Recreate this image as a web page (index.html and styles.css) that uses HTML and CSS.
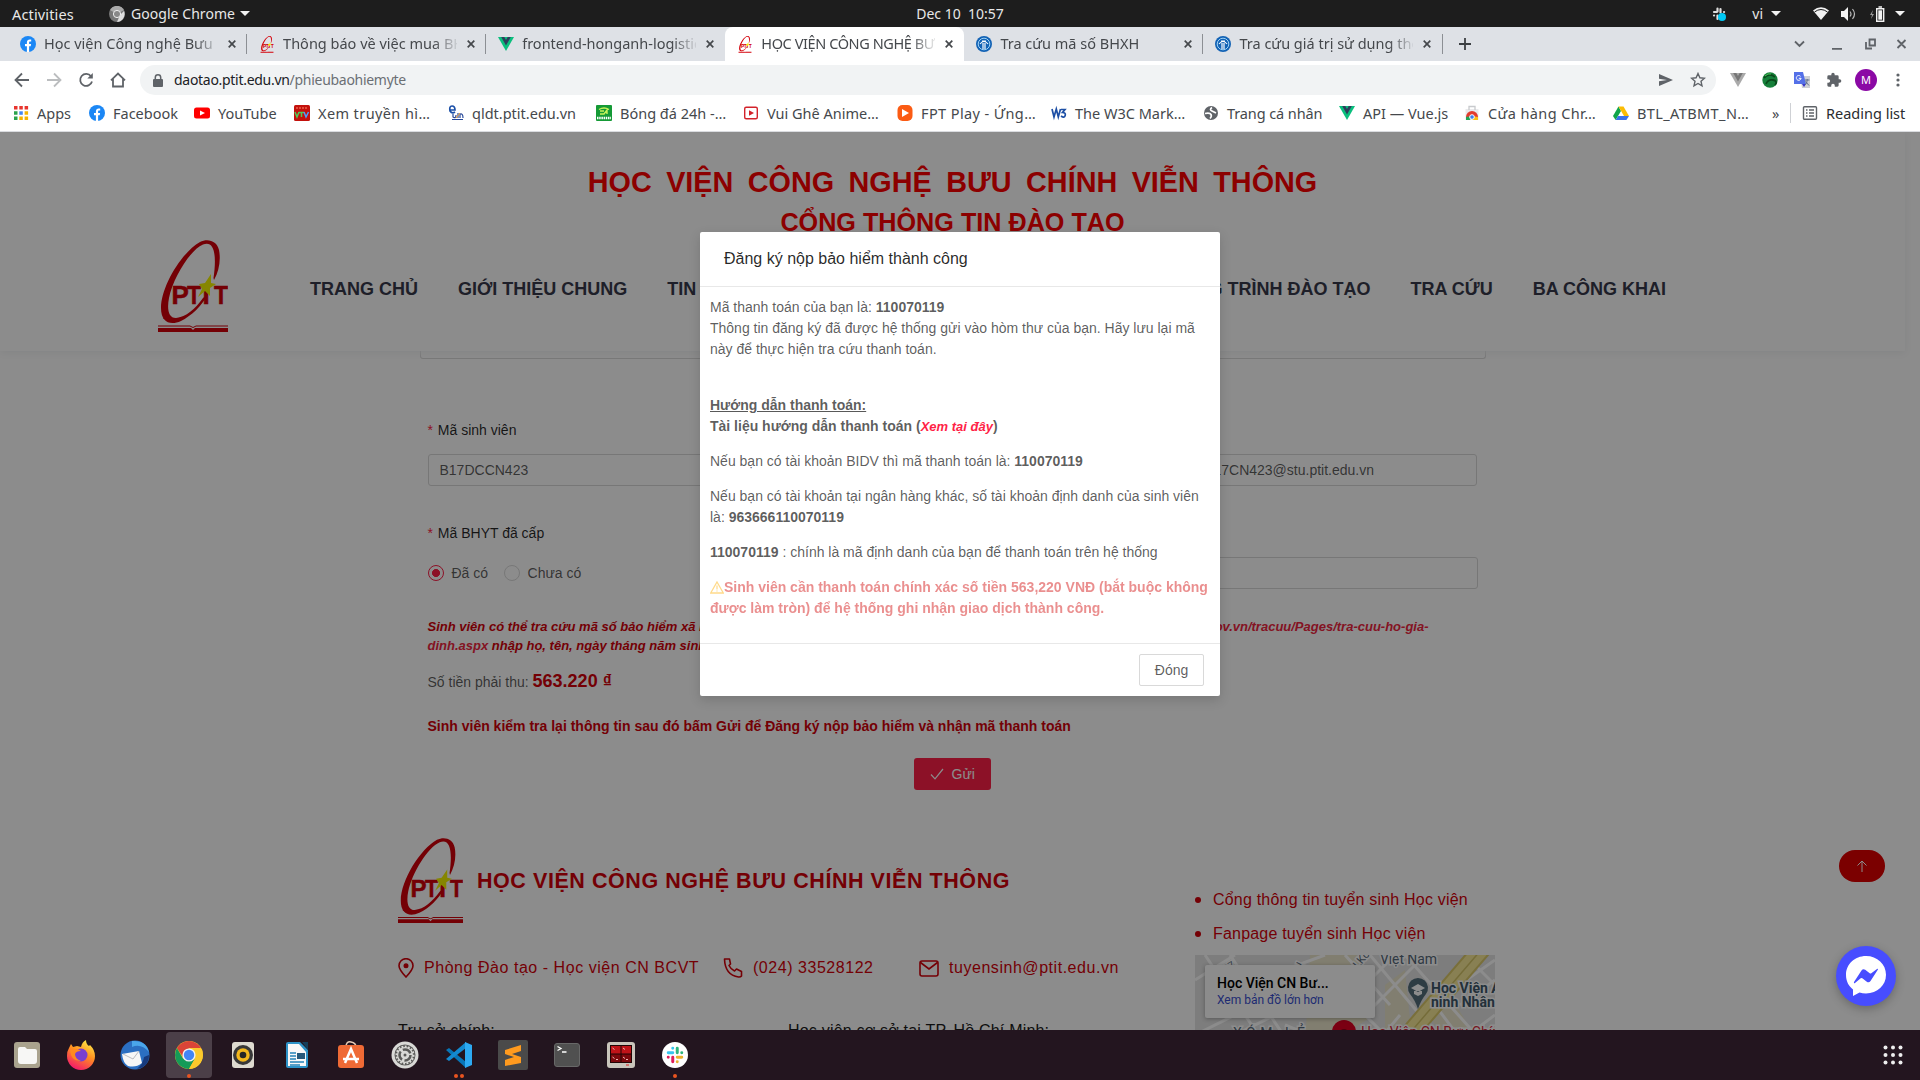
FILE: index.html
```html
<!DOCTYPE html>
<html lang="vi">
<head>
<meta charset="utf-8">
<title>Đăng ký nộp bảo hiểm</title>
<link rel="stylesheet" href="styles.css">
</head>
<body>
<svg class="defs" width="0" height="0">
  <symbol id="ptit" viewBox="0 0 70 92">
    <path fill="#d4000a" d="M56 40C61 31 63 20 61 10C59 1 50-2 42 2C24 12 3 46 3 68C3 82 12 86 23 81C33 76 44 66 50 54L45 58C37 69 28 77 18 78C10 78 9 68 11 58C15 38 32 10 45 4.500C56 0 59 14 55.500 38Z"/>
    <path fill="none" stroke="#d4000a" stroke-width=".8" d="M19 31Q24 20 31 13M5 78Q12 83 22 78"/>
    <g fill="#d4000a" stroke="#d4000a" stroke-width=".5" font-family="Liberation Sans, sans-serif" font-weight="700" font-size="26"><text x="13.500" y="64">P</text><text x="29" y="64" textLength="14" lengthAdjust="spacingAndGlyphs">T</text><text x="44.500" y="64">I</text><text x="56" y="64" textLength="14" lengthAdjust="spacingAndGlyphs">T</text></g>
    <path fill="#f4f400" d="M53 34L53 43L58 44L52 48L52 56L47 51L40 57L44 49L41 44L47 43Z"/>
    <path fill="#d4000a" d="M0 85.500H32L35 87L38 85.500H70V86.600H38L35 88L32 86.600H0ZM0 88H33L35 90L37 88H70V92H0Z"/>
  </symbol>
  <symbol id="fb" viewBox="0 0 16 16"><circle cx="8" cy="8" r="8" fill="#1b87f5"/><path fill="#fff" d="M6.9 16V10.3H5V8h1.9V6.4c0-2 1.1-3 2.8-3l1.5.1v2h-1c-.9 0-1.1.5-1.1 1.1V8h2l-.4 2.3H9.100V16z"/></symbol>
  <symbol id="vue" viewBox="0 0 16 16"><path fill="#0abf7d" d="M0 1h16L8 15z"/><path fill="#2f3e5c" d="M3.200 1H6.300L8 4l1.700-3h3.100L8 9.500z"/></symbol>
  <symbol id="bhxh" viewBox="0 0 16 16"><circle cx="8" cy="8" r="8" fill="#1262b5"/><circle cx="8" cy="8" r="5.800" fill="none" stroke="#9ed2f5"/><path d="M4 8Q8 3 12 8M7 7v6M9 7v6M6 5h4" stroke="#fff" fill="none" stroke-width="1.200"/></symbol>
  <symbol id="x" viewBox="0 0 8 8"><path d="M.7.7l6.600 6.600M7.300.7L.7 7.300" stroke="#45484c" stroke-width="1.700" fill="none"/></symbol>
  <symbol id="chrome" viewBox="0 0 28 28"><circle cx="14" cy="14" r="14" fill="#fbc92c"/><path fill="#db4437" d="M1.900 7A14 14 0 0 1 26.100 7H14L8 16z"/><path fill="#159b58" d="M1.900 7A14 14 0 0 0 14 28L20 17.500 8 17.500z"/><path fill="#fbc92c" d="M14 28L20 17.500 14 8H26.500A14 14 0 0 1 14 28z"/><circle cx="14" cy="14" r="6.600" fill="#f1f1f1"/><circle cx="14" cy="14" r="5.200" fill="#4285f4"/></symbol>
  <symbol id="hash" viewBox="0 0 20 20"><g stroke-width="3.300" stroke-linecap="round"><path stroke="#36c5f0" d="M2.500 7.500h5M7.500 2.500v.1"/><path stroke="#2eb67d" d="M12.500 2.500v5M17.500 7.500v.1"/><path stroke="#ecb22e" d="M12.500 12.500h5M12.500 17.500v.1"/><path stroke="#e01e5a" d="M7.500 12.500v5M2.500 12.500v.1"/></g></symbol>
</svg>

<header class="desktop-bar">
  <div class="db-left"><span class="activities">Activities</span>
    <svg width="16" height="16" viewBox="0 0 16 16"><circle cx="8" cy="8" r="8" fill="#777"/><path d="M8 8L1 4A8 8 0 0 1 15 4z" fill="#aaa"/><path d="M15 5a8 8 0 0 1-7 11l3-7z" fill="#ddd"/><circle cx="8" cy="8" r="3.600" fill="#888" stroke="#eee"/></svg>
    <span class="appname">Google Chrome</span><i class="caret"></i></div>
  <div class="clock">Dec 10&nbsp; 10:57</div>
  <div class="db-right">
    <svg width="14" height="14" viewBox="0 0 14 14"><path d="M2 5h3M5.500 1.500v3M8.500 2v3.500M12 5h.1M2 8.500h.1M5.500 8.500v3.500" stroke="#ddd" stroke-width="2.200" stroke-linecap="round"/><circle cx="10" cy="10" r="4" fill="#00c9f5"/></svg>
    <span class="lang">vi</span><i class="caret"></i>
    <svg class="wifi" width="16" height="13" viewBox="0 0 16 13"><path d="M0 3.500Q8-3 16 3.500L8 13z" fill="#f2f2f2"/><path d="M1.500 5Q8 0 14.500 5" fill="none" stroke="#1d1d1d"/></svg>
    <svg class="vol" width="16" height="14" viewBox="0 0 16 14"><path d="M0 4h3l4-4v14l-4-4H0z" fill="#f2f2f2"/><path d="M9 4.500q2 2.500 0 5M11.500 2q4 5 0 10" fill="none" stroke="#bbb" stroke-width="1.200"/></svg>
    <svg class="bat" width="16" height="16" viewBox="0 0 16 16"><path d="M3 4L0 9h2l-1 4 3-5H2z" fill="#999"/><path d="M6.700 2.700h7v12.600h-7zM8.500 1h3.500" fill="none" stroke="#f2f2f2" stroke-width="1.400"/><path d="M8.300 4.300h3.800v9.400H8.300z" fill="#f2f2f2"/></svg>
    <i class="caret"></i>
  </div>
</header>

<nav class="tabs">
  <div class="tab"><svg width="16" height="16"><use href="#fb"/></svg><span>Học viện Công nghệ Bưu</span><svg class="close" width="8" height="8"><use href="#x"/></svg></div>
  <div class="tab"><svg width="14" height="17"><use href="#ptit"/></svg><span>Thông báo về việc mua BH</span><svg class="close" width="8" height="8"><use href="#x"/></svg></div>
  <div class="tab plain"><svg width="16" height="16"><use href="#vue"/></svg><span>frontend-honganh-logistics</span><svg class="close" width="8" height="8"><use href="#x"/></svg></div>
  <div class="tab active"><svg width="14" height="17"><use href="#ptit"/></svg><span class="caps">HỌC VIỆN CÔNG NGHỆ BƯU</span><svg class="close" width="8" height="8"><use href="#x"/></svg></div>
  <div class="tab"><svg width="16" height="16"><use href="#bhxh"/></svg><span>Tra cứu mã số BHXH</span><svg class="close" width="8" height="8"><use href="#x"/></svg></div>
  <div class="tab"><svg width="16" height="16"><use href="#bhxh"/></svg><span>Tra cứu giá trị sử dụng thẻ</span><svg class="close" width="8" height="8"><use href="#x"/></svg></div>
  <svg class="plus" width="12" height="12" viewBox="0 0 12 12"><path d="M6 0v12M0 6h12" stroke="#3c4043" stroke-width="1.800"/></svg>
  <svg class="winctl" width="114" height="14" viewBox="0 0 114 14" fill="none" stroke="#5f6368" stroke-width="1.800"><path d="M1 4.500l4.500 4.500L10 4.500M38 11.800h10M75.500 2.500h5.500v6h-5.500zM72 5v6.500h6M103.500 3l8 8M111.500 3l-8 8"/></svg>
</nav>

<div class="toolbar">
  <svg class="navicons" width="114" height="16" viewBox="0 0 114 16" fill="none" stroke="#5f6368" stroke-width="1.800"><path d="M15 8H2M8 1.500L1.500 8 8 14.500"/><path stroke="#bbbdbf" d="M33 8h13M40 1.500L46.500 8 40 14.500"/><path d="M77 4.300A6 6 0 1 0 78 9.500"/><path d="M78.800 1v5.500h-5.500z" fill="#5f6368" stroke="none"/><path d="M97 8.300L104 1.500l7 6.800M99 7v7.500h10V7" /></svg>
  <div class="omnibox">
    <svg width="10" height="13" viewBox="0 0 10 13"><rect y="5" width="10" height="8" rx="1" fill="#5f6368"/><path d="M2.300 6V3.500a2.700 2.700 0 0 1 5.400 0V6" fill="none" stroke="#5f6368" stroke-width="1.500"/></svg>
    <p><b>daotao.ptit.edu.vn</b>/phieubaohiemyte</p>
    <svg width="14" height="12" viewBox="0 0 14 12"><path d="M0 0l14 6-14 6V7.200L8 6 0 4.800z" fill="#5f6368"/></svg>
    <svg class="star" width="16" height="16" viewBox="0 0 16 16"><path d="M8 1.500l1.900 4.300 4.600.4-3.500 3.100 1 4.600L8 11.500l-4 2.400 1-4.600L1.500 6.200l4.600-.4z" fill="none" stroke="#5f6368" stroke-width="1.400"/></svg>
  </div>
  <div class="exts">
    <svg width="16" height="16" viewBox="0 0 16 16"><path fill="#aaa" d="M0 1h16L8 15z"/><path fill="#777" d="M3.200 1H6.300L8 4l1.700-3h3.100L8 9.500z"/></svg>
    <svg width="16" height="16" viewBox="0 0 16 16"><circle cx="8" cy="8" r="7.700" fill="#16803a"/><path d="M2 6q5-6 11-1M4 12q2-5 7-4t2 5" stroke="#0b4a1c" fill="none" stroke-width="1.800"/><path d="M3 4q3-3 6-2" stroke="#4eca5c" fill="none"/></svg>
    <svg width="16" height="16" viewBox="0 0 16 16"><path d="M6 4h10v12H8z" fill="#cdd0d5"/><path d="M0 0h9l3 12H0z" fill="#5470e8"/><path d="M8 12h4l-2 3z" fill="#3a36c8"/><path d="M6.500 4.300a2.400 2.400 0 1 0 .6 2H4.800" stroke="#fff" fill="none"/><path d="M11 8h4.500M13.200 7v1q0 3-2 5M11.500 9.500l3.500 4" stroke="#61708c" fill="none"/></svg>
    <svg width="16" height="16" viewBox="0 0 24 24"><path fill="#5f6368" d="M20.500 11H19V7a2 2 0 0 0-2-2h-4V3.500a2.500 2.500 0 0 0-5 0V5H4a2 2 0 0 0-2 2v3.800h1.500a2.700 2.700 0 0 1 0 5.400H2V20a2 2 0 0 0 2 2h3.800v-1.500a2.700 2.700 0 0 1 5.400 0V22H17a2 2 0 0 0 2-2v-4h1.500a2.500 2.500 0 0 0 0-5z"/></svg>
    <span class="avatar">M</span>
    <svg width="16" height="16" viewBox="0 0 16 16" fill="#5f6368"><circle cx="8" cy="3" r="1.600"/><circle cx="8" cy="8" r="1.600"/><circle cx="8" cy="13" r="1.600"/></svg>
  </div>
</div>

<div class="bookmarks">
  <a><svg width="16" height="16" viewBox="0 0 16 16"><path fill="#e8352e" d="M1 1h3.500v3.500H1zM6.300 1h3.500v3.500H6.300zM11.600 1h3.500v3.500h-3.500z"/><path fill="#2ba24c" d="M1 6.300h3.500v3.500H1zM1 11.600h3.500v3.500H1z"/><path fill="#4285f4" d="M6.300 6.300h3.500v3.500H6.300z"/><path fill="#f5b400" d="M11.600 6.300h3.500v3.500h-3.500zM6.300 11.600h3.500v3.500H6.300zM11.600 11.600h3.500v3.500h-3.500z"/></svg>Apps</a>
  <a><svg width="16" height="16"><use href="#fb"/></svg>Facebook</a>
  <a><svg width="16" height="16" viewBox="0 0 16 16"><rect y="2.500" width="16" height="11" rx="2.500" fill="#f00"/><path d="M6 5.500L11 8l-5 2.500z" fill="#fff"/></svg>YouTube</a>
  <a class="loose"><svg width="16" height="16" viewBox="0 0 16 16"><rect width="16" height="16" rx="1.500" fill="#c3110c"/><path d="M2 3h12" stroke="#ff8a6a" stroke-dasharray="2 1"/><path d="M1 7l2 5 2-5M5 7.500h5M7.500 7v5" stroke="#54c95a" fill="none" stroke-width="1.500"/><path d="M10 7l2 5 2.500-5" stroke="#4ca0ff" fill="none" stroke-width="1.500"/></svg>Xem truyền hì…</a>
  <a><svg width="16" height="16" viewBox="0 0 16 16"><path d="M2 5h5Q7 1 4 1T2 6q2 3 5 1" fill="none" stroke="#1c50a8" stroke-width="1.700"/><path d="M5 9v3q3 2 3-2M10 8v5M12 13V9q3-1 3 4M4 14.500h11" fill="none" stroke="#26489a" stroke-width="1.200"/><path d="M8 13l4-5" stroke="#ee9b2e"/></svg>qldt.ptit.edu.vn</a>
  <a><svg width="16" height="16" viewBox="0 0 16 16"><rect width="16" height="16" rx="1" fill="#159a36"/><path d="M3 4.500q5-3 10 0M4 9h4l3-4v4M4 6h4" fill="none" stroke="#c7f25a" stroke-width="1.400"/><path d="M1 13h14" stroke="#fff" stroke-width="2.500" stroke-dasharray="1.500 .7"/></svg>Bóng đá 24h -…</a>
  <a><svg width="16" height="16" viewBox="0 0 16 16"><rect x="1.700" y="2.200" width="12.600" height="11.600" rx="1.500" fill="#fff" stroke="#d3222a" stroke-width="1.400"/><path d="M6 5.200L11 8l-5 2.800z" fill="#d3222a"/></svg>Vui Ghê Anime…</a>
  <a class="loose"><svg width="16" height="16" viewBox="0 0 16 16"><rect x=".5" width="15" height="16" rx="5" fill="#fb5b13"/><path d="M5 4l7 4-7 4z" fill="#fff"/></svg>FPT Play - Ứng…</a>
  <a><svg width="16" height="16" viewBox="0 0 16 16"><path d="M1 4l2 8 2.300-8 2 8 2.200-8M10 4.500h4l-2.500 3q3.500 0 2.700 3T10 11" fill="none" stroke="#1d4fa5" stroke-width="1.700"/></svg>The W3C Mark…</a>
  <a class="tight"><svg width="16" height="16" viewBox="0 0 16 16"><circle cx="8" cy="8" r="7" fill="#5f6368"/><path d="M2 8.500q5-1 6 1t-1 4M9 2.500q-3 2 0 3.500t4 2" fill="none" stroke="#fff" stroke-width="1.700"/></svg>Trang cá nhân</a>
  <a><svg width="16" height="16"><use href="#vue"/></svg>API — Vue.js</a>
  <a class="loose"><svg width="16" height="16" viewBox="0 0 16 16"><path d="M1.500 4h13v11h-13z" fill="#e9eaec"/><path d="M5 5V1.500h6V5" fill="none" stroke="#c8cacd" stroke-width="1.300"/><path d="M2 12a6 6 0 0 1 12 0H8z" fill="#e33b2e"/><path d="M2 12v3h4l2-4z" fill="#23a455"/><path d="M14 12v3H8V11z" fill="#fbc116"/><circle cx="8" cy="12" r="2.300" fill="#3b7ded" stroke="#fff"/></svg>Cửa hàng Chr…</a>
  <a class="loose"><svg width="16" height="16" viewBox="0 0 16 16"><path fill="#10a54a" d="M5.500 1.500L0 11l2.600 4L8 6z"/><path fill="#fbbc04" d="M5.500 1.500h5L16 11h-5z"/><path fill="#3a71e8" d="M5 11h11l-2.600 4H2.600z"/></svg>BTL_ATBMT_N…</a>
  <span class="more">»</span>
  <a class="reading"><svg width="16" height="16" viewBox="0 0 16 16"><rect x="1.500" y="1.700" width="13" height="12.600" rx="1" fill="none" stroke="#5f6368" stroke-width="1.400"/><path d="M4 5h1.500M4 8h1.500M4 11h1.500M7 5h5M7 8h5M7 11h5" stroke="#5f6368" stroke-width="1.300"/></svg>Reading list</a>
</div>

<main class="page">
  <header class="site-header">
    <h1>HỌC VIỆN CÔNG NGHỆ BƯU CHÍNH VIỄN THÔNG</h1>
    <h2>CỔNG THÔNG TIN ĐÀO TẠO</h2>
    <div class="menu-row">
      <svg class="logo" width="70" height="92"><use href="#ptit"/></svg>
      <ul class="menu"><li>TRANG CHỦ</li><li>GIỚI THIỆU CHUNG</li><li>TIN TỨC</li><li class="push">CHƯƠNG TRÌNH ĐÀO TẠO</li><li>TRA CỨU</li><li>BA CÔNG KHAI</li></ul>
    </div>
  </header>

  <section class="form">
    <div class="frag"></div>
    <div class="fields">
      <label class="lbl"><i>*</i> Mã sinh viên</label>
      <div class="row"><div class="input">B17DCCN423</div><div class="input"></div><div class="input mail">B17CN423@stu.ptit.edu.vn</div></div>
      <label class="lbl second"><i>*</i> Mã BHYT đã cấp</label>
      <div class="row wide"><div class="radios"><span class="radio on"></span>Đã có<span class="radio"></span>Chưa có</div><div class="input bh"></div></div>
      <p class="hint"><span class="split"><span>Sinh viên có thể tra cứu mã số bảo hiểm xã hội tại</span><em>baohiemxahoi.gov.vn/tracuu/Pages/tra-cuu-ho-gia-</em></span><em>dinh.aspx</em> nhập họ, tên, ngày tháng năm sinh</p>
      <p class="amount">Số tiền phải thu: <b>563.220 ₫</b></p>
      <p class="confirm">Sinh viên kiểm tra lại thông tin sau đó bấm Gửi để Đăng ký nộp bảo hiểm và nhận mã thanh toán</p>
      <button class="send"><svg width="14" height="12" viewBox="0 0 14 12"><path d="M1 6.500l4 4.300L13 1" fill="none" stroke="#fff" stroke-width="1.200"/></svg>Gửi</button>
    </div>
  </section>

  <footer class="site-footer">
    <div class="f-left">
      <div class="brand"><svg width="65" height="85" viewBox="0 0 70 92" preserveAspectRatio="none"><use href="#ptit" width="70" height="92"/></svg><h3>HỌC VIỆN CÔNG NGHỆ BƯU CHÍNH VIỄN THÔNG</h3></div>
      <div class="contacts">
        <span><svg width="16" height="20" viewBox="0 0 16 20" fill="none" stroke="#d4000a" stroke-width="1.600"><path d="M8 19Q1 11.500 1 7.700a7 7 0 0 1 14 0Q15 11.500 8 19z"/><circle cx="8" cy="7.700" r="1.700" fill="#d4000a"/></svg>Phòng Đào tạo - Học viện CN BCVT</span>
        <span><svg width="20" height="20" viewBox="0 0 20 20" fill="none" stroke="#d4000a" stroke-width="1.600"><path d="M1.500 1H6.500l1 5-1.500 1.500q2 4 5.500 5.500l2-2 5 2.500V18q-1 1.200-3 1Q2 17 1.500 1z" stroke-linejoin="round"/></svg>(024) 33528122</span>
        <span><svg width="20" height="17" viewBox="0 0 20 17" fill="none" stroke="#d4000a" stroke-width="1.600"><rect x="1" y="1" width="18" height="15" rx="2"/><path d="M1.500 2.500L10 9l8.500-6.500"/></svg>tuyensinh@ptit.edu.vn</span>
      </div>
      <div class="offices"><span>Trụ sở chính:</span><span>Học viện cơ sở tại TP. Hồ Chí Minh:</span></div>
    </div>
    <div class="f-right">
      <ul><li>Cổng thông tin tuyển sinh Học viện</li><li>Fanpage tuyển sinh Học viện</li></ul>
      <div class="map">
        <svg width="300" height="90" viewBox="0 0 300 90">
          <rect width="300" height="90" fill="#e3e3e3"/>
          <path d="M115 0h60l-20 25 25 35-50 30h-20zM255 40l30 50h-35l-15-30zM190 30l20-15 5 50-25 15z" fill="#ebe6cc"/>
          <g stroke="#fff" fill="none" stroke-width="3"><path d="M0 25L40 0M10 0l60 90M35 0l60 90M75 20L130 0M130 20l60 60M150 0l45 50M175 0l50 60M170 60l60-60M180 90L205 60M210 0l80 90M240 50l30 40M250 40L300 5M265 50l35-25M280 75l20-15M0 80l60-30M20 90l60-30M90 70l50 20M270 0l30 30M165 35l30-30"/></g>
          <path d="M292-12L196 100" stroke="#dcca6a" stroke-width="19"/><path d="M292-12L196 100" stroke="#f8ea98" stroke-width="15"/><path d="M292-12L196 100" stroke="#d5c568" stroke-width="1.500"/>
          <g font-family="Roboto, sans-serif" fill="#56697a" stroke="#fff" stroke-width="3" paint-order="stroke" font-size="14"><text x="185" y="9" textLength="57">Việt Nam</text><text x="98" y="14" font-size="11" transform="rotate(25 98 14)">764</text><text x="163" y="14" font-size="11" transform="rotate(-50 163 14)">LKô</text><text x="30" y="18" font-size="10" transform="rotate(-30 30 18)">P7</text><g font-weight="700" fill="#40586a"><text x="236" y="38">Học Viện An</text><text x="236" y="52">ninh Nhân dân</text></g><text x="38" y="83" textLength="72">XÓM LẺ</text><text x="166" y="82" fill="#d8283a">Học Viện CN Bưu Chính</text></g>
          <path d="M223 54Q220 45 215 39a10 10 0 1 1 16 0Q226 45 223 54z" fill="#546e7a"/><path d="M223 29l7 4-7 4-7-4zM219 36v3l4 2 4-2v-3" fill="#fff"/>
          <circle cx="149" cy="77" r="12" fill="#e00022"/><circle cx="149" cy="78" r="4" fill="#8c0016"/>
        </svg>
        <div class="mapcard"><b>Học Viện CN Bư...</b><a>Xem bản đồ lớn hơn</a></div>
      </div>
    </div>
  </footer>

  <div class="totop"><svg width="12" height="12" viewBox="0 0 12 12"><path d="M6 12V1M1.500 5.500L6 1l4.500 4.500" fill="none" stroke="#fff"/></svg></div>
  <div class="mask"></div>
  <section class="modal">
    <header>Đăng ký nộp bảo hiểm thành công</header>
    <div class="body">
      <p>Mã thanh toán của bạn là: <b>110070119</b><br>Thông tin đăng ký đã được hệ thống gửi vào hòm thư của bạn. Hãy lưu lại mã<br>này để thực hiện tra cứu thanh toán.</p>
      <br>
      <p><b><u>Hướng dẫn thanh toán:</u><br>Tài liệu hướng dẫn thanh toán (<em>Xem tại đây</em>)</b></p>
      <p>Nếu bạn có tài khoản BIDV thì mã thanh toán là: <b>110070119</b></p>
      <p>Nếu bạn có tài khoản tại ngân hàng khác, số tài khoản định danh của sinh viên<br>là: <b>963666110070119</b></p>
      <p><b>110070119</b> : chính là mã định danh của bạn để thanh toán trên hệ thống</p>
      <p class="warn"><svg width="14" height="13" viewBox="0 0 14 13"><path d="M7 1L13.300 12H.7z" fill="none" stroke="#ffb81f" stroke-width="1.300"/><path d="M7 4.500v4M7 9.500v1" stroke="#ffb81f" stroke-width="1.200"/></svg>Sinh viên cần thanh toán chính xác số tiền 563,220 VNĐ (bắt buộc không<br>được làm tròn) để hệ thống ghi nhận giao dịch thành công.</p>
    </div>
    <footer><button>Đóng</button></footer>
  </section>
  <div class="messenger"><svg width="40" height="40" viewBox="0 0 40 40"><path fill="#fff" d="M20 0C8.700 0 0 8.300 0 19c0 6 2.500 11 7 14.500V40l6.500-3.500c2 .6 4.200 1 6.500 1 11.300 0 20-8 20-18.700S31.300 0 20 0z"/><path fill="#474dff" d="M8 26l7.500-11.500q1.500-2 3.700-.7l4.500 3.500q.8.500 1.600 0L31 13q1.500-.8.800.8L24.500 25q-1.500 2-3.700.7L16.300 22.300q-.8-.5-1.600 0L9 27q-1.500.8-1-1z"/></svg></div>
</main>

<footer class="dock">
  <span><svg width="28" height="28" viewBox="0 0 28 28"><rect x="1" y="1" width="26" height="26" rx="3" fill="#aaa38e"/><path d="M5 8q0-2 2-2h5l2 2h8q2 0 2 2v10q0 3-3 3H8q-3 0-3-3z" fill="#f7f7f5"/></svg></span>
  <span><svg width="30" height="30" viewBox="0 0 30 30"><defs><linearGradient id="ff" x1=".8" y1="0" x2=".3" y2="1"><stop offset="0" stop-color="#fff04a"/><stop offset=".45" stop-color="#ff9020"/><stop offset="1" stop-color="#f4156d"/></linearGradient></defs><path fill="url(#ff)" d="M3 8l2-4 2 3 4-1 4 1Q16 2 20 0q0 4 3 6l1-1q5 5 5 11a14 14 0 0 1-28 0q0-5 2-8z"/><circle cx="15" cy="15" r="6.500" fill="#7a3fd0"/><path d="M4 10q6-3 11 1-5 0-6 3 0 5 6 7-10 1-11-11z" fill="#ff8a1f"/></svg></span>
  <span><svg width="30" height="30" viewBox="0 0 30 30"><circle cx="15" cy="15" r="14.500" fill="#2b6fc2"/><path d="M12 1q14-1 17 11-8-9-17-5z" fill="#4aa6ea"/><path d="M29 15q0 12-12 14 6-5 7-12z" fill="#173a7d"/><path d="M2 14l17-3 3 12q-6 5-14 3-5-3-6-12z" fill="#f6f6f6"/><path d="M3 14l10 5 6-8" fill="none" stroke="#b9bbc0"/></svg></span>
  <span class="current"><svg width="28" height="28"><use href="#chrome"/></svg><i></i></span>
  <span><svg width="24" height="28" viewBox="0 0 24 28"><rect x="1" y="1" width="22" height="26" rx="3" fill="#dedad0"/><circle cx="12" cy="14" r="10" fill="#383838"/><circle cx="12" cy="14" r="6.700" fill="#f3b71c"/><circle cx="12" cy="14" r="3.300" fill="#262626"/></svg></span>
  <span><svg width="24" height="28" viewBox="0 0 24 28"><path d="M1 3q0-2 2-2h12l8 8v16q0 2-2 2H3q-2 0-2-2z" fill="#2d93c8"/><path d="M3 3h11l7 8v14H3z" fill="#f8f8f8"/><path d="M17 1h6v8z" fill="#153f5b"/><path d="M5 12h6M5 15h6M5 18h6M5 21h14M5 24h10" stroke="#2482b8" stroke-width="1.300"/><rect x="12" y="12" width="8" height="6" fill="#25587a"/></svg></span>
  <span><svg width="28" height="28" viewBox="0 0 28 28"><path d="M9 6q0-6 5-5t5 5" fill="none" stroke="#e9cdb7" stroke-width="1.500"/><rect x="1" y="4" width="26" height="23" rx="3" fill="#ef6a35"/><path d="M8 22l6-14 6 14M6 18h16" fill="none" stroke="#fff" stroke-width="2.500"/></svg></span>
  <span><svg width="28" height="28" viewBox="0 0 28 28"><circle cx="14" cy="14" r="13.500" fill="#d9d9d6"/><circle cx="14" cy="14" r="10.500" fill="#5a5a58"/><circle cx="14" cy="14" r="8" fill="#d9d9d6"/><circle cx="14" cy="14" r="8.500" fill="none" stroke="#d9d9d6" stroke-width="2" stroke-dasharray="1.800 1.500"/><circle cx="14" cy="14" r="5.500" fill="none" stroke="#5a5a58" stroke-width="2.500" stroke-dasharray="9 2.500"/><circle cx="14" cy="14" r="1.500" fill="#5a5a58"/></svg></span>
  <span><svg width="28" height="28" viewBox="0 0 28 28"><path d="M1 9l3-2 17 14v6z" fill="#0876b8"/><path d="M1 18l3 2L21 7V1z" fill="#148ad0"/><path d="M20 1l7 3v20l-7 3z" fill="#2daaf2"/></svg><i></i><i></i></span>
  <span><svg width="30" height="30" viewBox="0 0 30 30"><rect width="30" height="30" rx="2" fill="#4a4a4a"/><path d="M7 10l16-5v6l-9 3 9 3v6L7 26v-6l9-3-9-3z" fill="#ff9a1e"/></svg></span>
  <span><svg width="26" height="24" viewBox="0 0 26 24"><rect x=".5" y=".5" width="25" height="23" rx="2.500" fill="#505050" stroke="#686868"/><path d="M3.500 3.500l3.500 2-3.500 2M8 9h4.500" stroke="#fff" fill="none" stroke-width="1.300"/></svg></span>
  <span><svg width="28" height="26" viewBox="0 0 28 26"><rect width="28" height="26" rx="3" fill="#c9c5bb"/><rect x="3" y="3" width="22" height="18" fill="#220505"/><path d="M4 4h9.500v7.500H4zM14.500 4H24v7.500h-9.500z" fill="#c01318"/><path d="M4 12.500h9.500V20H4zM14.500 12.500H24V20h-9.500z" fill="#7d080c"/><path d="M5.500 6l2 1.500M16 6l2 1.500M5.500 15l2 1.500M16 15l2 1.500M9 17.500h2M19 17.500h2" stroke="#f2b5b5"/><path d="M19 23h3" stroke="#d22"/></svg></span>
  <span><svg width="26" height="26" viewBox="0 0 26 26"><circle cx="13" cy="13" r="13" fill="#fff"/><use href="#hash" x="4" y="4" width="18" height="18"/></svg><i></i></span>
  <svg class="grid" width="20" height="20" viewBox="0 0 20 20" fill="#eee"><circle cx="2.500" cy="2.500" r="2"/><circle cx="10" cy="2.500" r="2"/><circle cx="17.500" cy="2.500" r="2"/><circle cx="2.500" cy="10" r="2"/><circle cx="10" cy="10" r="2"/><circle cx="17.500" cy="10" r="2"/><circle cx="2.500" cy="17.500" r="2"/><circle cx="10" cy="17.500" r="2"/><circle cx="17.500" cy="17.500" r="2"/></svg>
</footer>
</body>
</html>
```
FILE: styles.css
```css
* { box-sizing: border-box; }
body { margin: 0; width: 1920px; height: 1080px; overflow: hidden; display: flex; flex-direction: column; font: 14px "Liberation Sans", Arial, sans-serif; }
svg { flex: none; display: block; }
p, h1, h2, h3, ul { margin: 0; padding: 0; }
ul { list-style: none; }
.defs { position: absolute; }

/* desktop bar */
.desktop-bar { height: 27px; flex: none; background: #1d1d1d; color: #e8e8e8; display: grid; grid-template-columns: 1fr auto 1fr; align-items: center; font: 14px "Noto Sans", sans-serif; }
.db-left { display: flex; align-items: center; padding-left: 12px; }
.activities { width: 97px; font-size: 14.5px; letter-spacing: .15px; }
.appname { margin-left: 6px; width: 109px; letter-spacing: .05px; }
.caret { border: 5px solid transparent; border-top: 5px solid #f2f2f2; border-bottom: 0; }
.clock { font-size: 14px; letter-spacing: 0; padding-bottom: 1px; }
.db-right { display: flex; align-items: center; justify-content: flex-end; padding-right: 15px; }
.lang { margin: 0 8px 0 26px; }
.wifi { margin-left: 32px; }
.vol { margin-left: 12px; }
.bat { margin: 0 9px 0 13px; }

/* tab strip */
.tabs { height: 34px; flex: none; background: #dee1e6; display: flex; align-items: center; padding-left: 8px; font: 14.500px "Noto Sans", sans-serif; color: #45484c; }
.tab { width: 239.1px; height: 34px; flex: none; display: flex; align-items: center; padding-left: 12px; background: linear-gradient(#8c8f94, #8c8f94) right 0 center / 1px 20px no-repeat; }
.tab > svg:first-child { width: 16px; }
.tab span { width: 174px; height: 30px; line-height: 28px; margin-left: 8px; white-space: nowrap; overflow: hidden; -webkit-mask-image: linear-gradient(90deg, #000 150px, transparent 177px); mask-image: linear-gradient(90deg, #000 150px, transparent 177px); }
.tab .caps { letter-spacing: -.4px; }
.close { margin-left: 10px; }
.tab.plain { background: none; }
.tab.active { background: #fff; border-radius: 8px 8px 0 0; }
.plus { margin-left: 16px; }
.winctl { margin-left: auto; margin-right: 12px; }

/* toolbar */
.toolbar { height: 38px; flex: none; background: #fff; display: flex; align-items: center; padding-left: 14px; font: 14px "Noto Sans", sans-serif; }
.omnibox { width: 1576px; height: 30px; margin-left: 12px; border-radius: 15px; background: #f1f3f4; display: flex; align-items: center; padding: 0 10px 0 13px; }
.omnibox p { margin: 0 auto 0 11px; padding-bottom: 2px; color: #6b6f74; letter-spacing: -.29px; }
.omnibox b { font-weight: 400; color: #202124; }
.star { margin-left: 17px; }
.exts { display: flex; align-items: center; gap: 16px; margin-left: 14px; }
.avatar { width: 22px; height: 22px; margin: 0 -3px; border-radius: 50%; background: #8b09a5; color: #fff; font-size: 11px; line-height: 22px; text-align: center; }

/* bookmarks */
.bookmarks { height: 33px; flex: none; background: #fff; border-bottom: 1px solid #dadce0; display: grid; align-items: center; padding: 0 0 5px 13px; grid-template-columns: 76px 105px 100px 154px 148px 147px 154px 154px 152px 136px 125px 149px 151px 26px 1fr; font: 14.500px "Noto Sans", sans-serif; color: #45484c; }
.bookmarks a { display: flex; gap: 8px; align-items: center; white-space: nowrap; line-height: 20px; }
.bookmarks .loose { letter-spacing: .4px; }
.bookmarks .tight { letter-spacing: -.1px; }
.bookmarks .reading { border-left: 1px solid #cfd1d5; padding-left: 11px; color: #2a2c2f; }
.more { padding-left: 8px; }

/* page */
.page { position: relative; flex: 1; overflow: hidden; background: #fff; }
.site-header { position: relative; width: 1905px; height: 219px; padding-top: 30px; background: #fff; box-shadow: 0 2px 8px #f0f1f2; color: #f00; text-align: center; }
h1 { font-size: 28.8px; line-height: 40px; word-spacing: 6.4px; }
h2 { font-size: 25.2px; line-height: 40px; }
.menu-row { display: flex; align-items: center; height: 92px; margin-top: -2px; padding-left: 158px; color: #383a4b; }
.menu { display: flex; gap: 40px; width: 1356px; margin: 7px 0 0 82px; font-size: 18px; font-weight: 700; white-space: nowrap; }
.push { margin-left: auto; }
.form { width: 1066px; margin-left: 420px; }
.frag { height: 8px; border: 1px solid #d9d9d9; border-top: 0; border-radius: 0 0 3px 3px; }
.fields { padding: 60px 8px 0 7.5px; color: rgba(0,0,0,.65); }
.lbl { display: block; line-height: 22px; color: rgba(0,0,0,.85); }
.lbl i { margin-right: 1px; font-style: normal; color: #ff1f47; }
.lbl.second { margin-top: 36px; }
.row { display: grid; grid-template-columns: repeat(3, 1fr); gap: 16px; margin: 13px 1px 0 0; }
.input { height: 32px; border: 1px solid #d9d9d9; border-radius: 3px; padding: 0 11px; line-height: 30px; }
.mail { text-align: right; padding-right: 102px; }
.wide { grid-template-columns: 1fr 1fr; margin-right: 0; }
.radios { display: flex; align-items: center; }
.radio { width: 16px; height: 16px; margin: 0 8px 0 15.5px; border: 1px solid #d9d9d9; border-radius: 50%; }
.radio.on { margin-left: 0; border-color: #ff1f47; background: radial-gradient(circle, #ff1f47 3.700px, transparent 4.300px); }
.hint { margin-top: 28px; font: italic 700 13px/19px "Liberation Sans", sans-serif; color: #d4000a; }
.hint em { color: #f02540; }
.split { display: flex; justify-content: space-between; width: 1001px; }
.amount { margin-top: 12px; line-height: 28px; }
.amount b { font-size: 18px; color: #d4000a; }
.confirm { margin-top: 20px; line-height: 21px; font-weight: 700; color: #d4000a; }
.send { display: flex; align-items: center; gap: 8px; width: 77px; height: 32px; margin: 21px 0 0 486px; padding: 0 16px; border: 0; border-radius: 3px; background: #ff1f47; color: #fff; font: 14px "Liberation Sans", sans-serif; }
.site-footer { display: flex; padding: 48px 0 0 398px; color: #d4000a; font-size: 16px; }
.f-left { width: 797px; }
.brand { display: flex; align-items: center; gap: 14px; height: 85px; }
h3 { margin-top: 2px; font-size: 21.500px; letter-spacing: .56px; }
.contacts { display: grid; grid-template-columns: 325px 196px auto; align-items: center; height: 24px; margin-top: 33px; letter-spacing: .54px; white-space: nowrap; }
.contacts span { display: flex; align-items: center; gap: 10px; }
.offices { display: grid; grid-template-columns: 390px auto; margin-top: 39px; line-height: 24px; color: #1a1a1a; letter-spacing: .2px; }
.f-right { width: 300px; padding-top: 45px; letter-spacing: .2px; }
.f-right li { position: relative; padding-left: 18px; height: 34px; line-height: 34px; }
.f-right li::before { content: ""; position: absolute; left: 0; top: 14px; width: 6px; height: 6px; border-radius: 50%; background: #d4000a; }
.map { position: relative; margin-top: 4px; height: 90px; overflow: hidden; letter-spacing: 0; }
.mapcard { position: absolute; left: 10px; top: 10px; width: 170px; height: 53px; padding: 9px 12px; background: #fff; border-radius: 2px; box-shadow: 0 1px 4px rgba(0,0,0,.3); font-family: Roboto, sans-serif; white-space: nowrap; }
.mapcard b { display: block; font-size: 14px; line-height: 18px; font-weight: 500; color: #000; }
.mapcard a { display: block; font-size: 12px; line-height: 17px; color: #3a4fd0; }
.totop { position: absolute; left: 1839px; top: 718px; width: 46px; height: 32px; border-radius: 16px; background: #e00000; display: flex; align-items: center; justify-content: center; }
.mask { position: absolute; inset: 0; background: rgba(0,0,0,.45); }

/* modal */
.modal { position: absolute; left: 700px; top: 100px; width: 520px; height: 464px; border-radius: 2px; background: #fff; box-shadow: 0 4px 12px rgba(0,0,0,.15); color: rgba(0,0,0,.65); }
.modal header { height: 55px; padding: 16px 24px; border-bottom: 1px solid #e8e8e8; font-size: 16px; line-height: 22px; color: rgba(0,0,0,.85); }
.modal .body { height: 356px; padding: 10px; line-height: 21px; white-space: nowrap; }
.modal p { margin-bottom: 14px; }
.modal em { font-size: 13px; color: #ff1f47; }
.modal .warn { font-weight: 700; color: #d82a2a; opacity: .52; }
.warn svg { display: inline-block; vertical-align: -2px; }
.modal footer { border-top: 1px solid #e8e8e8; padding: 10px 16px; text-align: right; }
.modal button { width: 65px; height: 32px; border: 1px solid #d9d9d9; border-radius: 2px; background: #fff; color: rgba(0,0,0,.65); font: 14px "Liberation Sans", sans-serif; }
.messenger { position: absolute; left: 1836px; top: 814px; width: 60px; height: 60px; border-radius: 50%; background: #474dff; box-shadow: 0 3px 10px rgba(0,0,0,.25); display: flex; align-items: center; justify-content: center; }

/* dock */
.dock { height: 50px; flex: none; background: #23151f; display: flex; align-items: center; padding: 0 17px 0 4px; }
.dock span { position: relative; width: 46px; height: 46px; margin-right: 8px; flex: none; display: flex; align-items: center; justify-content: center; border-radius: 4px; }
.dock .current { background: #4b3f48; }
.dock i { position: absolute; left: 21px; bottom: 0; width: 4px; height: 4px; border-radius: 50%; background: #e95420; }
.dock i:nth-last-child(2) { left: 18px; }
.dock i + i { left: 24px; }
.grid { margin-left: auto; }
```
